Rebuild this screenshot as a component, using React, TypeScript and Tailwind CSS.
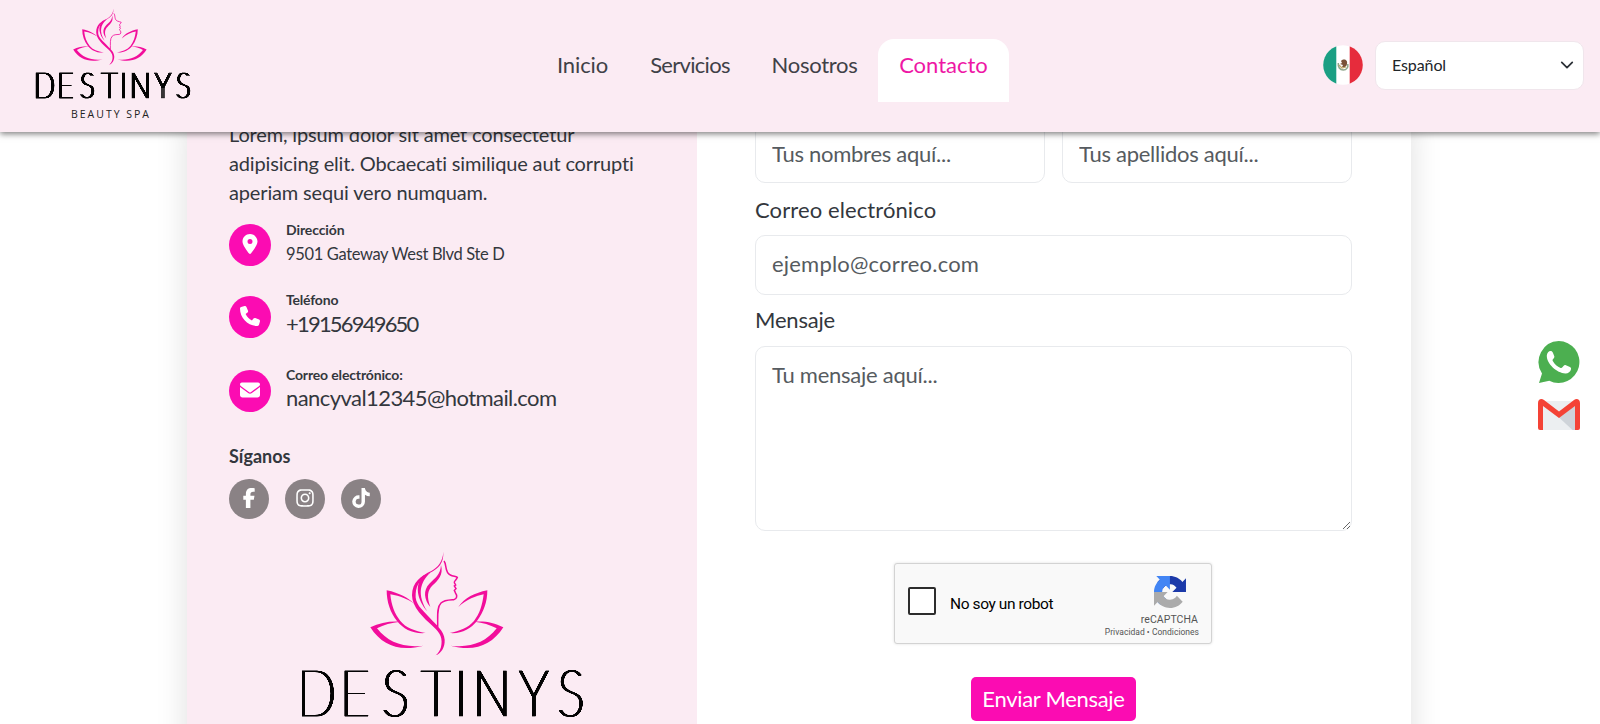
import type { ReactNode } from 'react'
import { FaEnvelope, FaFacebookF, FaInstagram, FaLocationDot, FaPhone, FaTiktok } from 'react-icons/fa6'

const inputClass =
  'block h-[60px] w-full rounded-[10px] border border-[#e8eaed] bg-white px-4 text-[22px] text-[#3d4247] placeholder:text-[#565b60] placeholder:opacity-100'

function Lotus({ className }: { className?: string }) {
  return (
    <svg viewBox="271 62 402 315" preserveAspectRatio="none" className={className} fill="#f20d9b" aria-hidden="true">
      <path d="M321 180C360 188 385 203 404 220C385 207 362 197 332 192C335 225 345 250 362 272C378 292 405 302 438 308C400 311 372 297 352 272C332 247 321 215 321 180Z" />
      <path d="M623 180C585 188 555 202 536 230C560 208 590 196 612 192C608 225 600 250 583 272C566 292 540 302 510 308C545 311 573 296 592 272C612 245 623 215 623 180Z" />
      <path d="M272 291C300 277 330 272 362 274C335 277 312 283 292 294C325 336 370 353 432 346C360 365 308 347 272 291Z" />
      <path d="M671 291C643 277 620 272 585 274C610 277 630 283 651 294C618 336 575 353 512 346C583 365 635 347 671 291Z" />
      <path d="M491 64C489 95 475 110 455 122C425 136 397 155 397 195C397 230 430 262 462 290C482 308 490 325 484 350C481 362 474 370 468 375C486 368 496 350 495 328C493 300 470 285 450 262C425 235 405 220 408 190C410 160 425 145 450 128C478 112 492 100 491 64Z" />
      <path d="M484 104C492 134 475 150 459 165C443 181 441 200 452 230C433 207 430 180 449 160C465 144 483 133 484 104Z" />
      <path d="M452 127C420 156 412 194 443 243C412 208 404 164 430 136Z" />
      <path
        d="M493 92C502 102 494 126 512 134C520 138 528 138 533 141C531 148 522 153 524 157L528 164L524 167L529 175L524 180L527 187C534 196 532 206 522 208C505 209 493 209 484 218C470 232 475 262 474 290"
        fill="none"
        stroke="#f20d9b"
        strokeWidth="4.500"
      />
    </svg>
  )
}

function Wordmark({ className }: { className?: string }) {
  return (
    <svg viewBox="0 0 300 48" preserveAspectRatio="none" className={`overflow-visible ${className}`} role="img">
      <defs>
        {/* thickens the vertical stems only */}
        <filter id="stem" x="-2%" y="-10%" width="105%" height="130%" colorInterpolationFilters="sRGB">
          <feMorphology operator="dilate" radius="1.700 0" />
          <feComponentTransfer>
            <feFuncA type="linear" slope="2.200" />
          </feComponentTransfer>
        </filter>
      </defs>
      <g transform="scale(.8 1)" filter="url(#stem)">
        <text
          x="4 57.500 110 159 201 223.500 281.500 329.500"
          y="47"
          className="font-[Lato] text-[64px] font-thin"
          fill="#050505"
          stroke="#050505"
          strokeWidth="0.5"
        >
          DESTINYS
        </text>
      </g>
    </svg>
  )
}

const links = [
  { label: 'Inicio', className: 'w-[93px] tracking-[-0.1px]' },
  { label: 'Servicios', className: 'w-[122px] tracking-[-0.7px]' },
  { label: 'Nosotros', className: 'w-[127px] tracking-[-0.3px]' },
]

function Header() {
  return (
    <header className="relative z-10 flex h-[132px] bg-[#fbebf3] shadow-[0_2px_6px_rgba(0,0,0,0.5)]">
      <div className="w-[536px] pl-8 pt-2">
        <Lotus className="ml-[41px] h-[57px] w-[74px]" />
        <Wordmark className="mt-[7px] h-[27px] w-[164px]" />
        <p className="ml-[39px] mt-2 w-max font-['Open_Sans'] text-[10.5px] leading-[15px] tracking-[2px] text-[#222]">
          BEAUTY SPA
        </p>
      </div>
      <nav className="flex pt-[39px] text-[22px] leading-[52px] text-[#3f4147]">
        {links.map((link) => (
          <a key={link.label} className={`h-[63px] text-center ${link.className}`}>
            {link.label}
          </a>
        ))}
        <a className="h-[63px] w-[131px] rounded-t-2xl bg-white text-center text-[#ee17a5]">Contacto</a>
      </nav>
      <div className="ml-auto flex items-start gap-3 pr-4 pt-[41px]">
        <svg viewBox="0 0 40 40" className="mt-1 size-10">
          <clipPath id="flag">
            <circle cx="20" cy="20" r="19.800" />
          </clipPath>
          <g clipPath="url(#flag)">
            <path fill="#fff" d="M0 0h40v40H0z" />
            <path fill="#1a9f83" d="M0 0h13.300v40H0z" />
            <path fill="#e62c3c" d="M26.700 0H40v40H26.700z" />
          </g>
          <path d="M15.300 18c-.5 4 1.500 7 5 7s5-3 4.500-6" fill="none" stroke="#8fa68b" strokeWidth="1.500" />
          <path d="M18 16c3-3 7-1 6 3-.5 3-3 4-5 3l1-2-3-1 2-1z" fill="#7a5138" />
          <path d="M16 20l3 3 4-1" fill="none" stroke="#c2a86b" strokeWidth="1.200" />
        </svg>
        <div className="relative">
          <select className="h-[49px] w-[209px] appearance-none rounded-[10px] border border-[#f0e6ec] bg-white pb-0.5 pl-4 text-[16px] tracking-[-0.1px] text-[#212529]">
            <option>Español</option>
          </select>
          <svg viewBox="0 0 16 16" className="pointer-events-none absolute right-[10px] top-[17px] size-[14px]">
            <path d="M2 5l6 6 6-6" fill="none" stroke="#2b3036" strokeWidth="2" strokeLinecap="round" strokeLinejoin="round" />
          </svg>
        </div>
      </div>
    </header>
  )
}

function Badge({ className, children }: { className: string; children: ReactNode }) {
  return (
    <span
      className={`flex size-[42px] shrink-0 items-center justify-center rounded-full bg-[#fb0cb2] pb-0.5 text-xl text-white ${className}`}
    >
      {children}
    </span>
  )
}

function ContactPanel() {
  return (
    <section className="w-[510px] bg-[#fbebf3] pl-[42px] text-[#33373d]">
      <div className="h-[100px] text-[20px] leading-[29px] tracking-[-0.15px]">
        <p className="w-max">Lorem, ipsum dolor sit amet consectetur</p>
        <p className="w-max">adipisicing elit. Obcaecati similique aut corrupti</p>
        <p className="w-max">aperiam sequi vero numquam.</p>
      </div>
      <div className="flex h-[70px] gap-[15px]">
        <Badge className="mt-1">
          <FaLocationDot />
        </Badge>
        <div>
          <p className="text-[14px] font-bold leading-5 tracking-[-0.1px]">Dirección</p>
          <p className="pt-px text-[16.5px] leading-[26px] tracking-[-0.35px]">9501 Gateway West Blvd Ste D</p>
        </div>
      </div>
      <div className="flex h-[75px] gap-[15px]">
        <Badge className="mt-1.5">
          <FaPhone />
        </Badge>
        <div>
          <p className="text-[14px] font-bold leading-5 tracking-[-0.2px]">Teléfono</p>
          <p className="pt-[3px] text-[22px] leading-[22px] tracking-[-1.8px]">+19156949650</p>
        </div>
      </div>
      <div className="flex h-20 gap-[15px]">
        <Badge className="mt-[5px]">
          <FaEnvelope />
        </Badge>
        <div>
          <p className="text-[14px] font-bold leading-5 tracking-[-0.15px]">Correo electrónico:</p>
          <p className="pt-0.5 text-[22px] leading-[22px] tracking-[-0.57px]">nancyval12345@hotmail.com</p>
        </div>
      </div>
      <h3 className="text-[18px] font-bold leading-[22px]">Síganos</h3>
      <div className="mt-3 flex gap-4 text-xl text-white">
        {[FaFacebookF, FaInstagram, FaTiktok].map((Icon, i) => (
          <span key={i} className="flex size-10 items-center justify-center rounded-full bg-[#8a8285] pb-0.5">
            <Icon />
          </span>
        ))}
      </div>
      <Lotus className="ml-[141px] mt-8 h-[105px] w-[134px]" />
      <Wordmark className="ml-[65px] mt-[13px] h-12 w-[300px]" />
    </section>
  )
}

function Recaptcha() {
  return (
    <div className="ml-[139px] mt-8 flex h-[81px] w-[318px] rounded-[3px] border border-[#d3d3d3] bg-[#f9f9f9] font-[Roboto] shadow-[0_0_3px_rgba(0,0,0,0.12)]">
      <span className="ml-[13px] mt-[23px] size-7 rounded-[2px] border-2 border-[#2d2d2d] bg-white" />
      <span className="ml-[14px] mt-[28px] text-[15.5px] leading-6 tracking-[-0.4px] text-black">No soy un robot</span>
      <div className="ml-auto mr-3 flex flex-col items-end text-[#555]">
        <svg viewBox="0 0 64 64" className="mr-[13px] mt-3 size-8">
          <path
            fill="#1c3aa9"
            d="M64 31.955l-.033-1.37V4.687l-7.16 7.16C50.948 4.674 42.033.093 32.05.093c-10.4 0-19.622 4.96-25.458 12.64l11.736 11.86a15.55 15.55 0 0 1 4.754-5.334c2.05-1.6 4.952-2.906 8.968-2.906.485 0 .86.057 1.135.163 4.976.393 9.288 3.14 11.828 7.124l-8.307 8.307L64 31.953"
          />
          <path
            fill="#4285f4"
            d="M31.862.094l-1.37.033H4.594l7.16 7.16C4.58 13.147 0 22.06 0 32.046c0 10.4 4.96 19.622 12.64 25.458L24.5 45.768a15.55 15.55 0 0 1-5.334-4.754c-1.6-2.05-2.906-4.952-2.906-8.968 0-.485.057-.86.163-1.135.393-4.976 3.14-9.288 7.124-11.828l8.307 8.307L31.86.095"
          />
          <path
            fill="#ababab"
            d="M.001 32.045l.033 1.37v25.898l7.16-7.16c5.86 7.173 14.774 11.754 24.76 11.754 10.4 0 19.622-4.96 25.458-12.64l-11.736-11.86a15.55 15.55 0 0 1-4.754 5.334c-2.05 1.6-4.952 2.906-8.968 2.906-.485 0-.86-.057-1.135-.163-4.976-.393-9.288-3.14-11.828-7.124l8.307-8.307c-10.522.04-22.4.066-27.295-.005"
          />
        </svg>
        <span className="mr-px mt-[5px] text-[10.5px] leading-[13px] tracking-[0.05px]">reCAPTCHA</span>
        <span className="text-[8.5px] leading-3 tracking-[0.02px]">Privacidad • Condiciones</span>
      </div>
    </div>
  )
}

function ContactForm() {
  return (
    <form className="w-[714px] bg-white pl-[58px] pr-[59px] pt-[3px] text-[22px] text-[#33373d]">
      <div className="flex gap-[17px]">
        <input className={`${inputClass} tracking-[-0.27px]`} placeholder="Tus nombres aquí..." />
        <input className={`${inputClass} tracking-[-0.27px]`} placeholder="Tus apellidos aquí..." />
      </div>
      <label className="mt-3 block leading-[30px] tracking-[0.1px]">Correo electrónico</label>
      <input className={`${inputClass} mt-[10px] pb-1 tracking-[0.2px]`} placeholder="ejemplo@correo.com" />
      <label className="mt-[10px] block leading-[30px] tracking-[-0.2px]">Mensaje</label>
      <textarea
        className="mt-[11px] block h-[185px] w-full rounded-[10px] border border-[#e8eaed] bg-white px-4 py-3 text-[22px] leading-[32px] tracking-[-0.25px] placeholder:text-[#565b60] placeholder:opacity-100"
        placeholder="Tu mensaje aquí..."
      />
      <Recaptcha />
      <button
        type="button"
        className="mx-auto mt-[33px] block h-11 w-[165px] rounded-[5px] bg-[#fb0cb2] text-[22px] leading-[42px] tracking-[-0.3px] text-white"
      >
        Enviar Mensaje
      </button>
    </form>
  )
}

function FloatingLinks() {
  return (
    <div className="absolute right-5 top-[341px] flex flex-col gap-[15px]">
      <svg viewBox="0.5 0 42 43" className="h-[43px] w-[42px]">
        <path fill="#4caf50" d="M21.300 0a20.700 21 0 1 1-9.500 39.700L1.500 42l3-9.500A20.700 21 0 0 1 21.300 0z" />
        <path
          fill="#fff"
          d="M9.300 14.500c.2-2.600 2-4.500 3.700-4.500 1.200 0 1.900.5 2.400 1.800l1.300 3.300c.4 1 .1 1.700-.6 2.400-1 1-1.300 1.500-.8 2.400 1.700 3.200 4.500 5.700 7.800 7 .8.300 1.200.1 1.800-.6l1.300-1.600c.7-.8 1.300-.9 2.200-.5l4 1.900c1 .5 1.300 1 1.100 2.100-.4 2.600-3 4.400-5.600 4.300-8.500-.5-18.900-9.700-18.600-18z"
        />
      </svg>
      <svg viewBox="0 0 42 31" className="h-[31px] w-[42px]">
        <path fill="#eceff1" d="M3 2h36v29H3z" />
        <path fill="#cfd4d9" d="M21 18.500L37 6v25h-2.500z" />
        <path fill="#f44336" d="M0 4C0 0 3.500-.8 6 1l15 11.500L36 1c2.500-1.800 6-1 6 3v25a2 2 0 0 1-2 2h-3V7L21 19 5 7v24H2a2 2 0 0 1-2-2z" />
      </svg>
    </div>
  )
}

export default function App() {
  return (
    <div className="relative h-[724px] overflow-hidden bg-white font-[Lato,sans-serif]">
      <Header />
      <main className="ml-[187px] -mt-3 flex h-[760px] w-[1224px] shadow-[0_0_30px_rgba(0,0,0,0.13)]">
        <ContactPanel />
        <ContactForm />
      </main>
      <FloatingLinks />
    </div>
  )
}
